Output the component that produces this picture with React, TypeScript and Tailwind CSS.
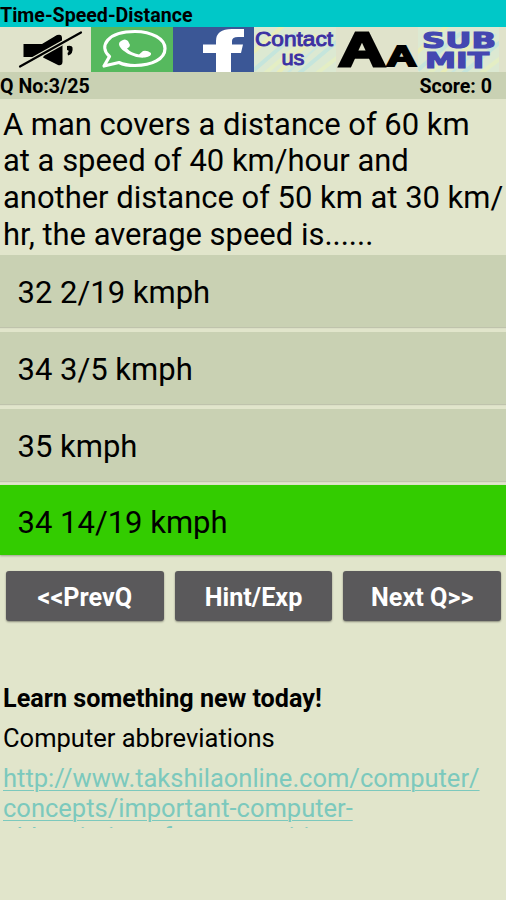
import React from 'react';

const options = [
  { id: 1, label: '32 2/19 kmph', correct: false },
  { id: 2, label: '34 3/5 kmph', correct: false },
  { id: 3, label: '35 kmph', correct: false },
  { id: 4, label: '34 14/19 kmph', correct: true },
];

const actions = ['<<PrevQ', 'Hint/Exp', 'Next Q>>'];

function MuteIcon() {
  return (
    <svg className="w-[91px] h-[45px]" viewBox="0 0 91 45">
      <path d="M23.500 17H42L57 8Q62 6.500 62 11V16L36 30H23.500Z" />
      <path d="M43 30.500L46 25L62.500 16V35Q62 39 58 38Z" />
      <path d="M67 19Q72 18 72.500 20.500Q73.500 27 68 28.500L67.500 26Q69 25 68.500 23.500L67 23Z" />
      <path d="M20 39.500L81 5.500" stroke="#e0e3cb" strokeWidth="4.800" />
      <path d="M20 39.500L81 5.500" stroke="#000" strokeWidth="2.200" strokeLinecap="round" />
    </svg>
  );
}

function WhatsappIcon() {
  return (
    <svg className="w-[82px] h-[45px] bg-[#56b95e]" viewBox="0 0 82 45">
      <path
        d="M13 39L18.500 29.500C7 19 17 4.500 44 4.500C61 4.500 74 12 74 21.500C74 32 61 38.500 44 38.500C37 38.500 32 37.500 28 35.500Z"
        fill="none"
        stroke="#fff"
        strokeWidth="3.200"
        strokeLinejoin="round"
      />
      <path
        d="M30 14Q34 11 37 14L39 18Q39 20 36 21.500Q40 26 48 27.500L52 24Q56 23 60 26Q61 29 54 30.500C43 32 28 23 28 17Q28 15 30 14Z"
        fill="#fff"
      />
    </svg>
  );
}

function FacebookIcon() {
  return (
    <svg className="w-[81px] h-[45px] bg-[#3b5796]" viewBox="0 0 81 45">
      <path
        d="M43 45V26H30V17.500H43V14Q43 2 59 2H71V10H65Q59 10 59 14V17.500H70L68 26H58V45Z"
        fill="#fff"
      />
    </svg>
  );
}

function StripedBackdrop() {
  return (
    <>
      <rect width="82" height="45" fill="#dce9d2" />
      <g fill="none" strokeWidth="4">
        <path d="M-4 28L30 -2M22 48L62 8" stroke="#e9edb8" />
        <path d="M0 43L43 6M43 48L86 12" stroke="#c5e5dc" />
        <path d="M8 49L54 10M58 50L88 27" stroke="#e4eec4" />
        <path d="M30 49L78 7" stroke="#cbe7df" strokeWidth="2" />
      </g>
    </>
  );
}

function ContactIcon() {
  return (
    <svg className="w-[82px] h-[45px]" viewBox="0 0 82 45">
      <StripedBackdrop />
      <g fill="#3c31a3" stroke="#3c31a3" strokeWidth="0.900" fontFamily="Liberation Sans, sans-serif" fontSize="20">
        <text x="1" y="19" textLength="78" lengthAdjust="spacingAndGlyphs">Contact</text>
        <text x="27.500" y="37.500" textLength="23" lengthAdjust="spacingAndGlyphs">us</text>
      </g>
    </svg>
  );
}

function FontSizeIcon() {
  return (
    <svg className="w-[82px] h-[45px]" viewBox="0 0 82 45">
      <g stroke="#000" fontFamily="Liberation Sans, sans-serif" fontWeight="700">
        <text x="2.500" y="38.500" fontSize="48" strokeWidth="3" textLength="47" lengthAdjust="spacingAndGlyphs">A</text>
        <text x="50.500" y="38.500" fontSize="30" strokeWidth="2.200" textLength="30" lengthAdjust="spacingAndGlyphs">A</text>
      </g>
    </svg>
  );
}

function SubmitIcon() {
  return (
    <svg className="w-[81px] h-[45px]" viewBox="0 0 81 45">
      <StripedBackdrop />
      <g fill="#4447b1" stroke="#4447b1" strokeWidth="1.100" fontFamily="DejaVu Sans, sans-serif" fontWeight="700" fontSize="21">
        <text x="4" y="20.500" textLength="74" lengthAdjust="spacingAndGlyphs">SUB</text>
        <text x="7" y="41" textLength="64" lengthAdjust="spacingAndGlyphs">MIT</text>
      </g>
    </svg>
  );
}

export default function App() {
  return (
    <div className="w-[506px] h-[900px] overflow-hidden bg-[#e1e5cb] text-black font-[Roboto,sans-serif]">
      {/* Title bar */}
      <header className="h-[27px] bg-[#00c8c8] text-[19.600px] leading-[31px] font-bold whitespace-nowrap">
        Time-Speed-Distance
      </header>

      {/* Toolbar */}
      <div className="flex h-[45px] bg-[#e0e3cb]">
        <MuteIcon />
        <WhatsappIcon />
        <FacebookIcon />
        <ContactIcon />
        <FontSizeIcon />
        <SubmitIcon />
      </div>

      {/* Question counter */}
      <div className="flex h-[27px] justify-between bg-[#c9d1b3] pr-3.5 text-[19.600px] leading-[30px] font-bold">
        <span>Q No:3/25</span>
        <span>Score: 0</span>
      </div>

      <p className="h-[156px] pt-[7.500px] pl-[3px] text-[30.950px] leading-[36.700px] whitespace-nowrap">
        A man covers a distance of 60 km
        <br />
        at a speed of 40 km/hour and
        <br />
        another distance of 50 km at 30 km/
        <br />
        hr, the average speed is......
      </p>

      {/* Answers */}
      <div className="flex flex-col gap-[5px]">
        {options.map((option) => (
          <button
            key={option.id}
            className={
              option.correct
                ? 'h-[70px] -mt-px bg-[#33cc00] pl-[17.500px] pt-1.5 text-left text-[31px] shadow-[0_1px_2px_rgba(0,0,0,0.3)]'
                : 'h-[72px] bg-[#c9d1b3] pl-[17.500px] pt-1 text-left text-[31px] shadow-[0_1px_1px_rgba(0,0,0,0.15)]'
            }
          >
            {option.label}
          </button>
        ))}
      </div>

      <div className="flex gap-[11px] px-[6px] pt-4">
        {actions.map((action) => (
          <button
            key={action}
            className="h-[50px] w-[157.700px] shrink-0 rounded-[3px] bg-[#5a595b] pt-[3px] text-[25.200px] font-bold text-white shadow-[0_1px_2px_rgba(0,0,0,0.4)]"
          >
            {action}
          </button>
        ))}
      </div>

      {/* Daily link */}
      <section className="mt-[63px] pl-[3px] text-[25.500px] leading-[30px] whitespace-nowrap">
        <h2 className="text-[25.200px] font-bold">Learn something new today!</h2>
        <p className="mt-[9px]">Computer abbreviations</p>
        <a className="mt-2.5 block h-[65px] overflow-hidden pt-px leading-[29.500px] text-[#7cc9bd] underline decoration-1 underline-offset-[3px]">
          http://www.takshilaonline.com/computer/
          <br />
          concepts/important-computer-
          <br />
          abbreviations-for-competitive
        </a>
      </section>
    </div>
  );
}
